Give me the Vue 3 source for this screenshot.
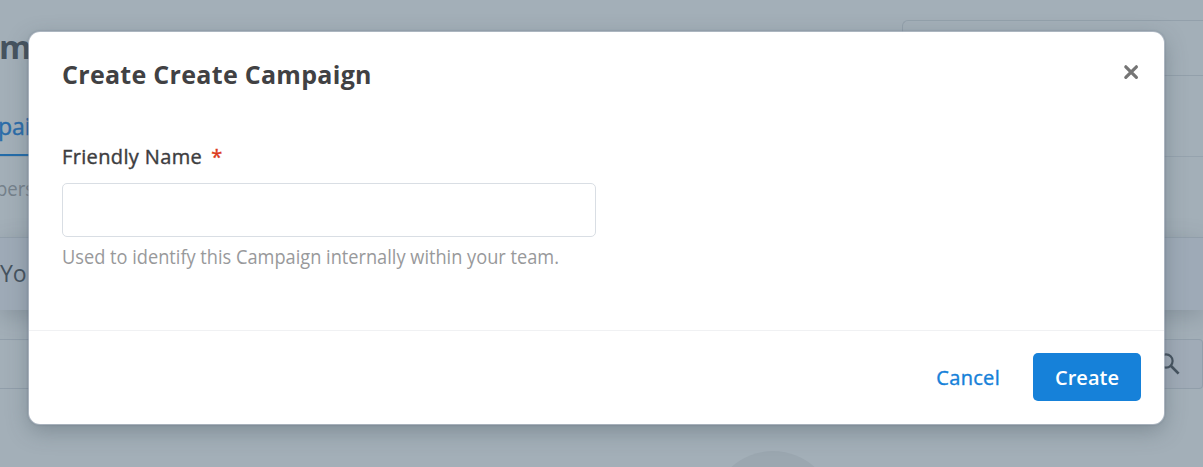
<script setup>
const title = 'Create Create Campaign'
</script>

<template>
  <div class="screen">
    <div class="page">
      <header class="page-head">
        <h1>m</h1>
        <div class="picker"></div>
      </header>
      <nav class="tabs"><span class="tab">pai</span></nav>
      <p class="summary">pers</p>
      <section class="banner">Yo</section>
      <div class="search">
        <svg width="22" height="22" viewBox="0 0 22 22" fill="none" stroke="#46535f">
          <circle cx="8" cy="8" r="6.6" stroke-width="2.2" />
          <path d="M12.8 12.8L20.6 20.6" stroke-width="2.7" />
        </svg>
      </div>
      <div class="disc"></div>
    </div>

    <div class="modal" role="dialog">
      <div class="modal-head">
        <h2>{{ title }}</h2>
        <button class="close" aria-label="Close">
          <svg width="16" height="16" viewBox="0 0 16 16" fill="none" stroke="#757575" stroke-width="3.2" stroke-linecap="round">
            <path d="M2.8 2.8L13.4 13.4M13.4 2.8L2.8 13.4" />
          </svg>
        </button>
      </div>
      <div class="modal-body">
        <label for="friendly-name">Friendly Name<span class="required">*</span></label>
        <input id="friendly-name" type="text" />
        <p class="hint">Used to identify this Campaign internally within your team.</p>
      </div>
      <footer class="modal-foot">
        <button class="cancel">Cancel</button>
        <button class="create">Create</button>
      </footer>
    </div>
  </div>
</template>

<style>
body {
  overflow: hidden;
}
</style>

<style scoped>
* {
  box-sizing: border-box;
}
.screen {
  position: relative;
  width: 1203px;
  height: 467px;
  overflow: hidden;
  background: #a3afb8;
  font-family: "Open Sans", "Noto Sans", sans-serif;
}
h1,
h2,
p {
  margin: 0;
}
button {
  font-family: inherit;
  border: 0;
  padding: 0;
  background: none;
}
.page-head {
  display: flex;
  justify-content: space-between;
  height: 96px;
  padding-top: 20px;
}
h1 {
  margin-left: -1px;
  font-size: 33px;
  line-height: 53px;
  font-weight: 700;
  color: #46535f;
}
.picker {
  width: 301px;
  height: 56px;
  border: 1px solid #93a0ab;
  border-right: 0;
  border-radius: 6px 0 0 6px;
}
.tabs {
  height: 61px;
  border-bottom: 1px solid #96a3ae;
}
.tab {
  display: inline-block;
  width: 40px;
  height: 60px;
  border-bottom: 2px solid #246ca9;
  color: #2b6ca9;
  font-size: 23px;
  font-weight: 400;
  -webkit-text-stroke: 0.4px currentColor;
  line-height: 61px;
  margin-left: -2px;
}
.summary {
  height: 80px;
  line-height: 64px;
  font-size: 19.5px;
  color: #75818b;
  margin-left: -4px;
  transform: scaleX(0.95);
  transform-origin: left;
}
.banner {
  height: 73px;
  border-top: 1px solid #919eaa;
  background: #9eaab7;
  box-shadow: 0 6px 22px rgba(60, 75, 85, 0.26);
  font-size: 23px;
  line-height: 70px;
  color: #46535f;
}
.search {
  display: flex;
  justify-content: flex-end;
  align-items: center;
  height: 50px;
  margin-top: 29px;
  padding-right: 22px;
  border: 1px solid #919eaa;
  border-left: 0;
  border-radius: 0 4px 4px 0;
  background: linear-gradient(90deg, transparent 50%, #a0abb7 50%);
}
.disc {
  width: 124px;
  height: 124px;
  margin: 62px 0 0 711px;
  border-radius: 50%;
  background: #9ba7b0;
}
.modal {
  position: absolute;
  left: 29px;
  top: 32px;
  width: 1135px;
  height: 392px;
  border-radius: 11px;
  background: #fff;
  box-shadow: 0 0 0 1px rgba(200, 207, 216, 0.6), 0 0 2px 1px rgba(70, 85, 105, 0.35), 0 7px 22px rgba(55, 70, 80, 0.34);
}
.modal-head {
  display: flex;
  justify-content: space-between;
  height: 111px;
  padding: 23px 25px 0 33px;
}
h2 {
  font-size: 25px;
  line-height: 38px;
  font-weight: 700;
  letter-spacing: 0.3px;
  color: #414143;
}
.close {
  width: 16px;
  height: 16px;
  margin-top: 9px;
}
.close svg,
.search svg {
  display: block;
}
.modal-body {
  height: 187px;
  padding-left: 33px;
}
label {
  display: block;
  height: 40px;
  line-height: 27px;
  font-size: 20px;
  font-weight: 400;
  letter-spacing: 0.36px;
  -webkit-text-stroke: 0.4px currentColor;
  color: #3d3d3f;
}
.required {
  margin-left: 9px;
  color: #dc3a1b;
}
input {
  display: block;
  width: 534px;
  height: 54px;
  border: 1px solid #d9dee4;
  border-radius: 5px;
  background: #fff;
}
.hint {
  margin-top: 6px;
  font-size: 19.3px;
  line-height: 27px;
  color: #98999b;
  transform: scaleX(0.944);
  transform-origin: left;
}
.modal-foot {
  display: flex;
  justify-content: flex-end;
  gap: 33px;
  height: 94px;
  padding: 22px 23px 0 0;
  border-top: 1px solid #f0f1f3;
}
.modal-foot button {
  height: 48px;
  font-size: 20px;
  font-weight: 600;
  line-height: 49px;
}
.modal-foot .cancel {
  font-weight: 400;
  letter-spacing: 0.3px;
  -webkit-text-stroke: 0.4px currentColor;
  color: #1681d9;
}
.modal-foot .create {
  width: 108px;
  border-radius: 5px;
  background: #1681d9;
  color: #fff;
}
</style>
